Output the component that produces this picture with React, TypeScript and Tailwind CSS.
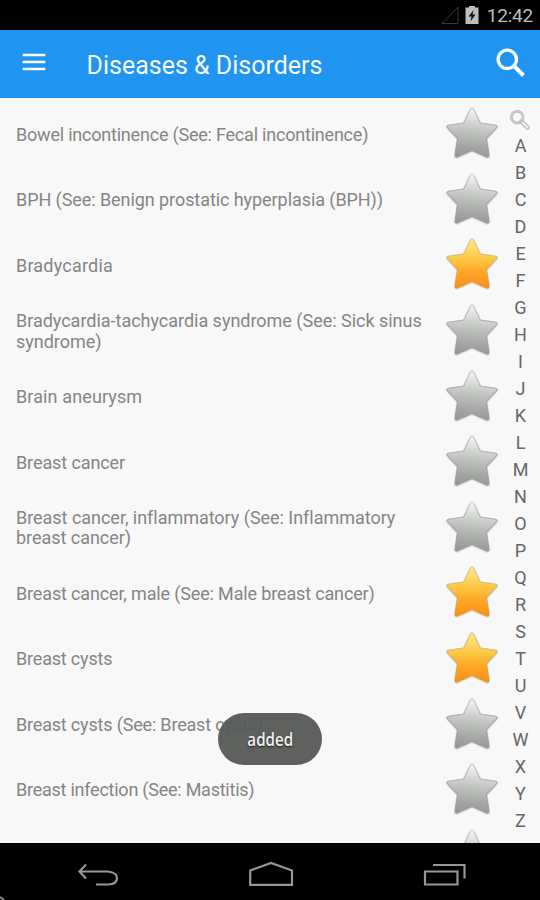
import React from "react";

const items: { name: string; starred?: boolean; fit?: string }[] = [
  { name: "Bowel incontinence (See: Fecal incontinence)", fit: "tracking-[-0.21px]" },
  { name: "BPH (See: Benign prostatic hyperplasia (BPH))", fit: "tracking-[-0.07px]" },
  { name: "Bradycardia", starred: true, fit: "tracking-[0.2px]" },
  { name: "Bradycardia-tachycardia syndrome (See: Sick sinus syndrome)", fit: "tracking-[-0.02px]" },
  { name: "Brain aneurysm", fit: "tracking-[0.12px]" },
  { name: "Breast cancer", fit: "tracking-[-0.1px]" },
  { name: "Breast cancer, inflammatory (See: Inflammatory breast cancer)", fit: "tracking-[-0.03px]" },
  { name: "Breast cancer, male (See: Male breast cancer)", starred: true, fit: "tracking-[-0.15px]" },
  { name: "Breast cysts", starred: true, fit: "tracking-[-0.18px]" },
  { name: "Breast cysts (See: Breast cysts)", fit: "tracking-[-0.18px]" },
  { name: "Breast infection (See: Mastitis)", fit: "tracking-[-0.24px]" },
  { name: "" },
];

const starPath =
  "M28.2 4.8Q30 1.8 31.8 4.8L38.6 19L54.2 21.2Q57.4 22 54.8 24.4L45 35L47.6 52Q47.6 55 44.6 54L30 47.4L15.4 54Q12.4 55 12.4 52L15 35L5.2 24.4Q2.6 22 5.8 21.2L21.4 19Z";

function Star({ on }: { on?: boolean }) {
  return (
    <svg viewBox="-1.1 -0.8 62.2 62.2" className="h-[60px] w-[60px] shrink-0">
      <path d={starPath} fill="none" stroke={on ? "#b9a888" : "#a5a8a5"} strokeOpacity="0.3" strokeWidth="2.6" transform="translate(0 0.6)" />
      <path d={starPath} fill={on ? "url(#gold)" : "url(#silver)"} stroke={on ? "url(#goldEdge)" : "url(#silverEdge)"} strokeWidth="1.1" />
    </svg>
  );
}

export default function App() {
  return (
    <div className="relative flex h-[900px] w-[540px] flex-col overflow-hidden bg-[#f8f8f8] font-['Roboto',sans-serif]">
      <svg className="absolute h-0 w-0">
        <defs>
          <linearGradient id="silver" x1="0.1" y1="0" x2="0" y2="1">
            <stop offset="0" stopColor="#f0f2f0" />
            <stop offset="0.35" stopColor="#c8cbc7" />
            <stop offset="0.6" stopColor="#b0b3af" />
            <stop offset="1" stopColor="#8f928e" />
          </linearGradient>
          <linearGradient id="silverEdge" x1="0" y1="0" x2="0" y2="1">
            <stop offset="0" stopColor="#cfd1cf" />
            <stop offset="0.4" stopColor="#a8aba8" />
            <stop offset="1" stopColor="#9a9c9a" />
          </linearGradient>
          <linearGradient id="gold" x1="0" y1="0" x2="0" y2="1">
            <stop offset="0" stopColor="#ffe98a" />
            <stop offset="0.4" stopColor="#fdc844" />
            <stop offset="0.65" stopColor="#fda92a" />
            <stop offset="1" stopColor="#f98d14" />
          </linearGradient>
          <linearGradient id="goldEdge" x1="0" y1="0" x2="0" y2="1">
            <stop offset="0" stopColor="#dccb91" />
            <stop offset="1" stopColor="#dd9638" />
          </linearGradient>
        </defs>
      </svg>

      <div className="flex h-[30px] shrink-0 items-center justify-end bg-black pr-[7px]">
        <svg viewBox="0 0 18 18" className="mr-[6px] h-[18px] w-[18px]" fill="none" stroke="#3a3a3a">
          <path d="M1 17.5L17 1V17.5Z" />
        </svg>
        <svg viewBox="0 0 14 20" className="mr-[8px] h-[20px] w-[14px]">
          <path d="M4 1H10V2.5H13.5V19H.5V2.5H4Z" fill="#bdbdbd" />
          <path d="M8.5 5L3.5 11.5H6.5L5.5 16.5L10.5 9.5H7.5Z" fill="#111" />
        </svg>
        <span className="pt-px text-[19px] leading-[30px] tracking-[-0.2px] text-[#bdbdbd]">12:42</span>
      </div>

      <header className="flex h-[68px] shrink-0 items-center border-b border-[#2287dc] bg-[#2094f1] pt-px">
        <svg viewBox="0 0 24 18" className="ml-[22px] h-[18px] w-[24px] -translate-y-[2px]" stroke="#fff" strokeWidth="2.6">
          <path d="M.7 2H23.3M.7 9H23.3M.7 16H23.3" />
        </svg>
        <h1 className="ml-[40.5px] pt-[4px] text-[25px] leading-8 text-[#f4faff]">Diseases &amp; Disorders</h1>
        <svg viewBox="0 0 30 30" className="ml-auto mr-[14px] h-[30px] w-[30px] -translate-y-px" fill="none" stroke="#fff">
          <circle cx="11.3" cy="11.3" r="9.2" strokeWidth="3.3" />
          <path d="M18 18L27.5 27.5" strokeWidth="4" />
        </svg>
      </header>

      <main className="flex h-[745px] shrink-0 overflow-hidden">
        <div className="flex w-[502px] flex-col pt-[3.4px]">
          {items.map((item, i) => (
            <div key={i} className="flex h-[65.6px] shrink-0 items-center">
              <p className={`w-[426px] pl-4 pt-[1.2px] text-[18px] leading-[20.5px] text-[#858585] ${item.fit ?? ""}`}>{item.name}</p>
              <div className="ml-auto"><Star on={item.starred} /></div>
            </div>
          ))}
        </div>
        <nav className="flex w-[38px] flex-col items-center pr-px pt-[10px] text-[18px] text-[#666]">
          <div className="flex h-[24px] items-center pr-px">
            <svg viewBox="0 0 22 22" className="h-[22px] w-[22px]" fill="none">
              <path d="M12.5 12.5L18.5 18.5" stroke="#bdbdbd" strokeWidth="4.6" strokeLinecap="round" />
              <path d="M13.5 13.5L18.2 18.2" stroke="#ededed" strokeWidth="2.4" strokeLinecap="round" />
              <circle cx="8.2" cy="8.2" r="5.8" stroke="#bdbdbd" strokeWidth="2.8" />
              <circle cx="8.2" cy="8.2" r="5.8" stroke="#d2d2d2" strokeWidth="1" />
            </svg>
          </div>
          {"ABCDEFGHIJKLMNOPQRSTUVWXYZ".split("").map((c) => (
            <span key={c} className="h-[27px] shrink-0 leading-[27px]">{c}</span>
          ))}
        </nav>
      </main>

      <div className="absolute left-[218px] top-[713px] flex h-[52px] w-[104px] items-center justify-center rounded-full bg-[#555855]/95">
        <span className="text-[18px] text-[#f0f0f0] [font-family:'Open_Sans',sans-serif] font-semibold [text-shadow:0_1px_2px_#222] scale-x-[0.84]">added</span>
      </div>

      <footer className="flex h-[57px] shrink-0 items-start bg-black">
        <svg viewBox="0 0 540 57" className="h-[57px] w-[540px]" fill="none" stroke="#969696" strokeWidth="2.2">
          <path d="M86 21.5L79.5 28.5L86 35.5M79.5 28.5H108Q117 29.5 117 35Q117 41.5 108 41.5H96" />
          <path d="M250.2 41.8V27.5L271 20L292 27.5V41.8Z" />
          <path d="M425 28.5H457.5V41.5H425ZM433 22H464.5V35.5" />
          <path d="M0 54L4 57" stroke="#777" />
        </svg>
      </footer>
    </div>
  );
}
